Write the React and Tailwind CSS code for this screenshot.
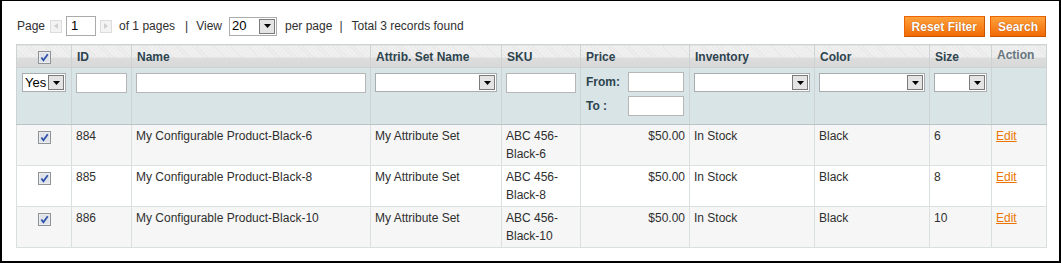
import React from "react";

const Checkbox = () => (
    <svg width="13" height="13" viewBox="0 0 13 13" className="block">
        <rect x="0.5" y="0.5" width="12" height="12" fill="#f4f4f4" stroke="#8f9396" />
        <rect x="1.5" y="1.5" width="10" height="10" fill="#dfe3e9" />
        <path d="M3.4 6.4 L5.4 9.2 L9.8 3.2" stroke="#2b4fa8" strokeWidth="1.7" fill="none" />
    </svg>
);

const ArrowBox = () => (
    <span className="ml-auto mr-px flex h-[15px] w-[16px] items-center justify-center border border-[#7b7b7b] bg-[#e4e4e4]">
        <svg width="7" height="4" viewBox="0 0 7 4">
            <path d="M0 0H7L3.5 4Z" fill="#000" />
        </svg>
    </span>
);

const Select = ({ value = "", className = "" }) => (
    <div className={"flex h-[19px] items-center border border-[#a9adb0] bg-white text-[13px] text-black " + className}>
        <span className="pl-[2px]">{value}</span>
        <ArrowBox />
    </div>
);

const Input = ({ className = "" }) => (
    <div className={"h-[20px] border border-[#b6b6b6] bg-white " + className} />
);

const NavBtn = ({ dir }) => (
    <span className="flex h-[13px] w-[12px] items-center justify-center border border-[#dcdcdc] bg-[#f3f3f3]">
        <svg width="4" height="6" viewBox="0 0 4 6">
            <path d={dir === "left" ? "M4 0V6L0 3Z" : "M0 0V6L4 3Z"} fill="#d0d0d0" />
        </svg>
    </span>
);

const rows = [
    { id: "884", name: "My Configurable Product-Black-6", sku: "Black-6", size: "6", bg: "bg-[#f6f6f6]" },
    { id: "885", name: "My Configurable Product-Black-8", sku: "Black-8", size: "8", bg: "bg-white" },
    { id: "886", name: "My Configurable Product-Black-10", sku: "Black-10", size: "10", bg: "bg-[#f6f6f6]" },
];

const headCls =
    "h-[23px] border border-[#cdd3d5] px-[5px] pt-[5px] text-left align-top text-[12px] font-bold leading-[14px] text-[#2d444f] bg-[image:linear-gradient(to_bottom,rgba(0,0,0,0)_0,rgba(0,0,0,0)_55%,#dddddd_55%,#d8d8d8_100%),repeating-linear-gradient(45deg,#e6e6e6_0,#e6e6e6_1px,#f1f1f1_1px,#f1f1f1_3px)]";

const filterCls =
    "h-[57px] border border-[#cdd3d5] border-b-[#b9c3c6] px-[4px] pt-[4px] align-top bg-[#d9e4e6]";

const cellCls = "border border-[#dadfe0] px-[4px] py-[2px] align-top text-[12px] leading-[18px] text-[#2f2f2f]";

export default function App() {
    return (
        <div className="h-[263px] w-[1061px] border-x-2 border-b-2 border-t border-black bg-white pl-[14px] pr-[13px] pt-[15px] font-['Liberation_Sans',Arial,sans-serif] text-[12px] text-[#2f2f2f]">
            <div className="flex h-[21px] items-start">
                <div className="flex h-[20px] items-center">
                    <span className="ml-px">Page</span>
                    <span className="ml-[5px]"><NavBtn dir="left" /></span>
                    <div className="ml-[4px] flex h-[20px] w-[30px] items-center border border-[#aaaaaa] bg-white pl-[4px] text-[13px] text-black">1</div>
                    <span className="ml-[4px]"><NavBtn dir="right" /></span>
                    <span className="ml-[7px]">of 1 pages</span>
                    <span className="ml-[10px]">|</span>
                    <span className="ml-[8px]">View</span>
                    <Select value="20" className="ml-[7px] h-[17px] w-[48px]" />
                    <span className="ml-[8px]">per page</span>
                    <span className="ml-[7px]">|</span>
                    <span className="ml-[9px]">Total 3 records found</span>
                </div>
                <div className="ml-auto flex gap-[5px]">
                    <button className="h-[21px] border border-[#ed6502] border-b-[#c95400] border-r-[#c95400] bg-[image:linear-gradient(to_bottom,#ffa13c,#f16b05)] px-[7px] text-[12px] font-bold text-white [text-shadow:0_0_1px_#a04300]">
                        Reset Filter
                    </button>
                    <button className="h-[21px] border border-[#ed6502] border-b-[#c95400] border-r-[#c95400] bg-[image:linear-gradient(to_bottom,#ffa13c,#f16b05)] px-[7px] text-[12px] font-bold text-white [text-shadow:0_0_1px_#a04300]">
                        Search
                    </button>
                </div>
            </div>

            <table className="mt-[7px] w-[1030px] table-fixed border-collapse">
                <colgroup>
                    <col className="w-[55px]" />
                    <col className="w-[60px]" />
                    <col className="w-[239px]" />
                    <col className="w-[131px]" />
                    <col className="w-[79px]" />
                    <col className="w-[109px]" />
                    <col className="w-[125px]" />
                    <col className="w-[115px]" />
                    <col className="w-[62px]" />
                    <col className="w-[55px]" />
                </colgroup>
                <thead>
                    <tr>
                        <th className={headCls}>
                            <div className="flex justify-center pt-px"><Checkbox /></div>
                        </th>
                        <th className={headCls}>ID</th>
                        <th className={headCls}>Name</th>
                        <th className={headCls}>Attrib. Set Name</th>
                        <th className={headCls}>SKU</th>
                        <th className={headCls}>Price</th>
                        <th className={headCls}>Inventory</th>
                        <th className={headCls}>Color</th>
                        <th className={headCls}>Size</th>
                        <th className={headCls + " !pt-[3px] !text-[#67767e]"}>Action</th>
                    </tr>
                    <tr>
                        <td className={filterCls + " !pl-[5px]"}>
                            <Select value="Yes" className="mt-px w-[44px]" />
                        </td>
                        <td className={filterCls}><Input className="mt-px" /></td>
                        <td className={filterCls}><Input className="mt-px" /></td>
                        <td className={filterCls}><Select className="mt-px" /></td>
                        <td className={filterCls}><Input className="mt-px" /></td>
                        <td className={filterCls}>
                            <div className="flex flex-col gap-[4px] text-[12px] font-bold text-[#2d444f]">
                                <div className="flex items-center">
                                    <span className="w-[43px] pl-px">From:</span>
                                    <Input className="w-[56px]" />
                                </div>
                                <div className="flex items-center">
                                    <span className="w-[43px] pl-px">To :</span>
                                    <Input className="w-[56px]" />
                                </div>
                            </div>
                        </td>
                        <td className={filterCls}><Select className="mt-px" /></td>
                        <td className={filterCls}><Select className="mt-px" /></td>
                        <td className={filterCls}><Select className="mt-px" /></td>
                        <td className={filterCls}></td>
                    </tr>
                </thead>
                <tbody>
                    {rows.map((r) => (
                        <tr key={r.id} className={r.bg}>
                            <td className={cellCls}>
                                <div className="flex justify-center pt-[4px]"><Checkbox /></div>
                            </td>
                            <td className={cellCls}>{r.id}</td>
                            <td className={cellCls}>{r.name}</td>
                            <td className={cellCls}>My Attribute Set</td>
                            <td className={cellCls}>ABC 456-<br />{r.sku}</td>
                            <td className={cellCls + " text-right"}>$50.00</td>
                            <td className={cellCls}>In Stock</td>
                            <td className={cellCls}>Black</td>
                            <td className={cellCls}>{r.size}</td>
                            <td className={cellCls}>
                                <a href="#" className="text-[#ea7601] underline">Edit</a>
                            </td>
                        </tr>
                    ))}
                </tbody>
            </table>
        </div>
    );
}
